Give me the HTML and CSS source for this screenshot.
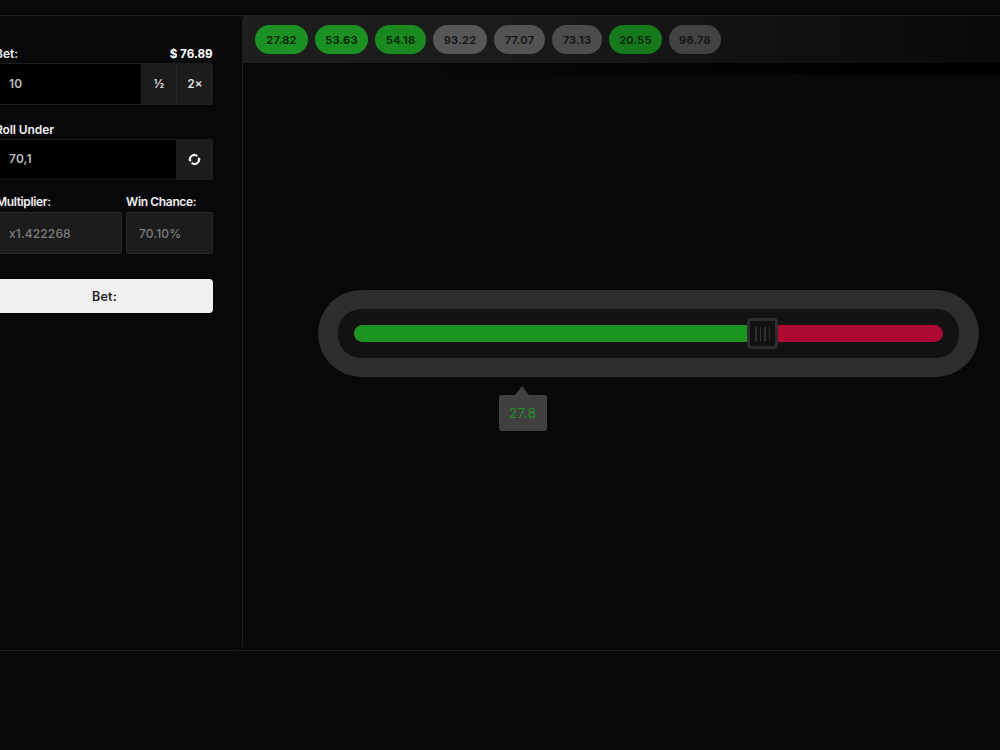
FILE: index.html
```
<!DOCTYPE html>
<html lang="en">
<head>
<meta charset="utf-8">
<title>Dice</title>
<link rel="stylesheet" href="styles.css">
</head>
<body>
<main class="game">
  <form class="panel">
    <div class="labels labels-bet"><span>Bet:</span><span class="balance">$ 76.89</span></div>
    <div class="field field-bet">
      <span class="value">10</span>
      <button type="button" class="addon">½</button>
      <button type="button" class="addon times">2×</button>
    </div>
    <div class="labels labels-roll"><span>Roll Under</span></div>
    <div class="field field-roll">
      <span class="value">70,1</span>
      <button type="button" class="addon swap" aria-label="Switch">
        <svg width="13" height="13" viewBox="0 0 13 13" fill="none" stroke="#f2f2f2" stroke-width="2.2">
          <path d="M2 7.6A4.5 4.5 0 0 1 9.4 3.2"/>
          <path d="M11 5.4A4.5 4.5 0 0 1 3.6 9.8"/>
          <path d="M0.4 6.8L3.6 6.8L2.4 9z" fill="#f2f2f2" stroke="none"/>
          <path d="M12.6 6.2L9.4 6.2L10.6 4z" fill="#f2f2f2" stroke="none"/>
        </svg>
      </button>
    </div>
    <div class="stats">
      <div class="stat"><span class="stat-label">Multiplier:</span><div class="readout mult">x1.422268</div></div>
      <div class="stat"><span class="stat-label">Win Chance:</span><div class="readout chance">70.10%</div></div>
    </div>
    <button type="button" class="submit">Bet:</button>
  </form>
  <section class="stage">
    <div class="history">
      <span class="pill win w53">27.82</span>
      <span class="pill win w53">53.63</span>
      <span class="pill win w51">54.18</span>
      <span class="pill w54">93.22</span>
      <span class="pill w51">77.07</span>
      <span class="pill w50">73.13</span>
      <span class="pill win w53">20.55</span>
      <span class="pill w52">96.78</span>
    </div>
    <div class="shade"></div>
    <div class="slider">
      <div class="well">
        <div class="track">
          <div class="under"></div>
          <div class="handle"><i></i><i></i><i></i><i></i></div>
        </div>
      </div>
      <div class="result">27.8</div>
    </div>
  </section>
</main>
</body>
</html>
```
FILE: styles.css
```
* { box-sizing: border-box; }
body {
  margin: 0;
  height: 750px;
  padding-top: 15px;
  overflow: hidden;
  background: #08080a;
  color: #f0f0f0;
  font-family: Inter, "Liberation Sans", sans-serif;
  font-size: 12px;
  font-weight: 600;
}
button { margin: 0; padding: 0; border: 0; font: inherit; color: inherit; }
.game {
  display: flex;
  height: 636px;
  border-top: 1px solid #1e1e20;
  border-bottom: 1px solid #1e1e20;
}
.panel {
  flex: none;
  width: 247px;
  margin-left: -4px;
  padding: 29px 30px 0 0;
  border-right: 1px solid #1e1e20;
  border-radius: 0 5px 5px 0;
}
.labels { display: flex; justify-content: space-between; line-height: 16px; }
.labels > span:first-child { margin-left: -1px; }
.labels-bet { height: 18px; }
.labels-bet span { position: relative; top: 0.5px; }
.labels-roll { height: 16px; margin-top: 18px; line-height: 14px; letter-spacing: -0.1px; }
.balance { font-size: 11.7px; font-weight: 700; color: #fff; margin-right: -0.7px; }
.field {
  display: flex;
  width: 217px;
  border: 1px solid #1d1d1f;
  border-radius: 2px;
  background: #000;
  color: #bdbdbd;
}
.field-bet { height: 42px; }
.field-roll { height: 41px; }
.value { flex: 1; padding-left: 12px; line-height: 39px; letter-spacing: 0.15px; }
.field-roll .value { line-height: 38px; }
.addon {
  width: 35px;
  background: #1c1c1d;
  color: #e5e5e5;
  display: flex;
  align-items: center;
  justify-content: center;
  padding-left: 1px;
  font-size: 11.5px;
}
.times { width: 36px; border-left: 1px solid #272728; }
.swap { width: 36px; padding: 0; }
.swap svg { display: block; margin-top: -1px; }
.stats { display: grid; grid-template-columns: 126px 87px; gap: 4px; margin-top: 14px; }
.stat-label {
  display: block;
  height: 18px;
  line-height: 15px;
  letter-spacing: -0.35px;
  white-space: nowrap;
}
.readout {
  height: 42px;
  line-height: 41px;
  padding-left: 12px;
  border: 1px solid #28282a;
  border-radius: 2px;
  background: #1b1b1c;
  color: #7e7e7e;
  font-size: 12px;
  font-weight: 500;
  letter-spacing: 0.15px;
}
.submit {
  display: block;
  width: 217px;
  height: 34px;
  margin-top: 25px;
  border-radius: 4px;
  background: #f0f0f0;
  color: #222;
  font-size: 12.5px;
  letter-spacing: 0.2px;
}
.stage { flex: 1; }
.history {
  display: flex;
  align-items: center;
  gap: 7px;
  height: 47px;
  padding-left: 12px;
  background: linear-gradient(90deg, #1e1e1e, #1a1a1a 35%, #090909);
}
.pill {
  height: 29px;
  line-height: 30px;
  border-radius: 15px;
  background: #575757;
  color: #171717;
  font-size: 11px;
  font-weight: 700;
  letter-spacing: 0.2px;
  text-align: center;
}
.win { background: #1b9123; color: #062708; }
.w50 { width: 50px; }
.w51 { width: 51px; }
.w52 { width: 52px; }
.w53 { width: 53px; }
.w54 { width: 54px; }
.pill:nth-child(3) { background: #198920; }
.pill:nth-child(5) { background: #535353; }
.pill:nth-child(6) { background: #4c4c4c; }
.pill:nth-child(7) { background: #167a1c; }
.pill:nth-child(8) { background: #424242; }
.shade { height: 12px; background: linear-gradient(90deg, #08080a 25%, #010101 80%); }
.slider {
  position: relative;
  width: 661px;
  height: 87px;
  margin: 215px 0 0 75px;
  padding: 19px 20px;
  border-radius: 44px;
  background: #2d2d30;
}
.well { height: 49px; padding: 16px; border-radius: 23px; background: #121211; }
.track {
  position: relative;
  height: 16.5px;
  border-radius: 9px;
  background: #ae0a33;
}
.under { width: 409px; height: 100%; border-radius: 9px 0 0 9px; background: #1b9422; }
.handle {
  position: absolute;
  left: 393px;
  top: -7px;
  width: 31px;
  height: 31px;
  display: flex;
  align-items: center;
  justify-content: center;
  gap: 3px;
  border: 3px solid #2d2d30;
  border-radius: 4px;
  background: #111113;
}
.handle i { width: 1.5px; height: 14px; background: #303033; }
.result {
  position: absolute;
  left: 181px;
  top: 105px;
  width: 47.5px;
  height: 36px;
  line-height: 37px;
  border-radius: 3px;
  background: #404040;
  color: #1b9422;
  font-size: 13.5px;
  font-weight: 400;
  letter-spacing: 0.4px;
  text-align: center;
}
.result::before {
  content: "";
  position: absolute;
  left: 16px;
  top: -9px;
  border: 7.5px solid transparent;
  border-top: 0;
  border-bottom: 9px solid #404040;
}
```
